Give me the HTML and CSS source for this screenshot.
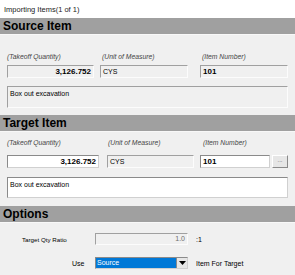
FILE: index.html
```html
<!DOCTYPE html>
<html lang="en">
<head>
  <meta charset="UTF-8" />
  <title>Importing Items</title>
  <link rel="stylesheet" href="styles.css">
</head>
<body>
  <div class="titlebar">Importing Items(1 of 1)</div>

  <div class="section-head">Source Item</div>
  <div class="section source">
    <div class="labels">
      <span class="lbl lbl-qty">(Takeoff Quantity)</span>
      <span class="lbl lbl-unit">(Unit of Measure)</span>
      <span class="lbl lbl-num">(Item Number)</span>
    </div>
    <div class="row">
      <div class="box off qty bold">3,126.752</div>
      <div class="box off unit">CYS</div>
      <div class="box off num bold">101</div>
    </div>
    <div class="desc off">Box out excavation</div>
  </div>

  <div class="section-head">Target Item</div>
  <div class="section target">
    <div class="labels">
      <span class="lbl lbl-qty">(Takeoff Quantity)</span>
      <span class="lbl lbl-unit">(Unit of Measure)</span>
      <span class="lbl lbl-num">(Item Number)</span>
    </div>
    <div class="row">
      <div class="box on qty bold">3,126.752</div>
      <div class="box off unit">CYS</div>
      <div class="box on num bold">101</div>
      <div class="dots">...</div>
    </div>
    <div class="desc on">Box out excavation</div>
  </div>

  <div class="section-head">Options</div>
  <div class="section options">
    <div class="opt-row">
      <span class="opt-lbl ratio-lbl">Target Qty Ratio</span>
      <div class="box off ratio">1.0</div>
      <span class="after">:1</span>
    </div>
    <div class="opt-row">
      <span class="opt-lbl use-lbl">Use</span>
      <div class="select">
        <span class="sel-val">Source</span>
        <span class="sel-btn">
          <svg width="7" height="4" viewBox="0 0 7 4"><path d="M0 0h7L3.5 4z" fill="#000"/></svg>
        </span>
      </div>
      <span class="after">Item For Target</span>
    </div>
  </div>
</body>
</html>
```

FILE: styles.css
```css
body {
  margin: 0;
  width: 295px;
  height: 275px;
  overflow: hidden;
  background: #f0f0f0;
  font-family: "Liberation Sans", Arial, sans-serif;
  font-size: 7px;
  color: #000;
}
.titlebar {
  height: 18px;
  line-height: 20px;
  background: #fff;
  padding-left: 4px;
  font-size: 7.5px;
  color: #222;
}
.section-head {
  height: 16px;
  line-height: 16px;
  background: #a0a0a0;
  border-bottom: 1px solid #f8f8f8;
  padding-left: 3px;
  font-size: 12px;
  font-weight: bold;
}
.section {
  padding-left: 7px;
}
.source {
  padding-top: 17px;
  height: 63px;
}
.target {
  padding-top: 6px;
  height: 68px;
}
.labels {
  position: relative;
  height: 9px;
  line-height: 9px;
}
.lbl {
  position: absolute;
  top: 0;
  font-style: italic;
  color: #444;
  font-size: 6.8px;
}
.lbl-qty { left: 0; }
.source .lbl-unit { left: 95px; }
.source .lbl-num { left: 195px; }
.target .lbl-unit { left: 101px; }
.target .lbl-num { left: 196px; }

.row {
  display: flex;
  align-items: center;
}
.source .row { margin-top: 4px; }
.target .row { margin-top: 8px; }

.box,
.desc {
  box-sizing: border-box;
  border-style: solid;
  border-width: 1px;
}
.box {
  height: 13px;
  line-height: 11px;
  padding: 0 2px;
  white-space: nowrap;
  overflow: hidden;
}
.desc {
  width: 281px;
  padding: 2px;
  line-height: 10px;
}
.off {
  background: #f0f0f0;
  border-color: #a0a0a0 #fcfcfc #fcfcfc #a0a0a0;
}
.on {
  background: #fff;
  border-color: #8a8a8a #d0d0d0 #d0d0d0 #8a8a8a;
}
.bold {
  font-weight: bold;
  font-size: 8px;
}
.qty { text-align: right; }

.source .qty { width: 87px; }
.source .unit { width: 88px; margin-left: 6px; }
.source .num { width: 88px; margin-left: 12px; }

.target .qty { width: 92px; }
.target .unit { width: 87px; margin-left: 8px; }
.target .num { width: 70px; margin-left: 6px; }

.dots {
  box-sizing: border-box;
  width: 16px;
  height: 13px;
  margin-left: 2px;
  border: 1px solid;
  border-color: #fff #8a8a8a #8a8a8a #fff;
  background: #e6e6e6;
  text-align: center;
  line-height: 9px;
  color: #555;
  font-size: 6px;
}

.source .desc { margin-top: 8px; height: 22px; }
.target .desc { margin-top: 9px; height: 21px; }

.options {
  padding-top: 10px;
  padding-left: 0;
}
.opt-row {
  display: flex;
  align-items: center;
  height: 12px;
  margin-bottom: 12px;
}
.opt-lbl {
  width: 95px;
  box-sizing: border-box;
}
.ratio-lbl { padding-left: 22px; font-size: 6.2px; }
.use-lbl { padding-left: 72px; }
.ratio {
  width: 93px;
  height: 12px;
  line-height: 10px;
  text-align: right;
  color: #6d6d6d;
}
.after { margin-left: 8px; }
.select {
  display: flex;
  box-sizing: border-box;
  width: 93px;
  height: 12px;
  border: 1px solid;
  border-color: #8a8a8a #d0d0d0 #d0d0d0 #8a8a8a;
  background: #fff;
}
.sel-val {
  flex: 1;
  background: #0078d7;
  color: #fff;
  line-height: 10px;
  padding-left: 1px;
}
.sel-btn {
  width: 10px;
  display: flex;
  align-items: center;
  justify-content: center;
  background: #e6e6e6;
  border-left: 1px solid #8a8a8a;
}
```
